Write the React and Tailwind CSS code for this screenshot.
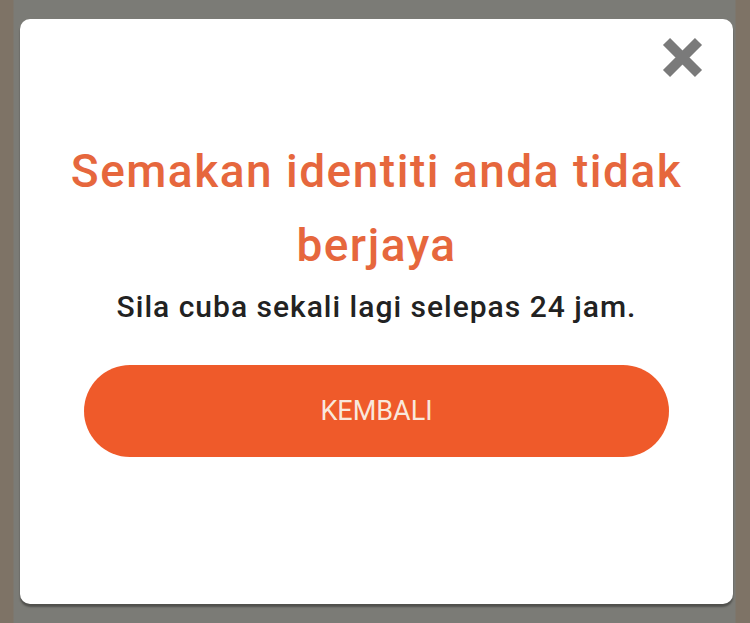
import React from 'react'

const CloseIcon = () => (
  <svg width="41" height="41" viewBox="0 0 41 41" aria-hidden="true">
    <path d="M4.5 4.5 L36.5 36.5 M36.5 4.5 L4.5 36.5" stroke="#7a7a7a" strokeWidth="10" strokeLinecap="butt" />
  </svg>
)

const App = () => {
  return (
    <div className="w-[750px] h-[623px] overflow-hidden pt-[19px] pl-[20px] pr-[17px] bg-[linear-gradient(to_right,#7e7366_0px,#7e7366_13px,#7b7b76_14px,#7b7b76_735px,#7e7366_736px)] font-['Roboto','Liberation_Sans',sans-serif]">
      <div className="h-[585px] rounded-[10px] bg-white shadow-[0_3px_2px_rgba(0,0,0,0.35)] flex flex-col">
        <div className="flex justify-end pt-[18px] pr-[30px]">
          <button type="button" className="w-[41px] h-[41px]">
            <CloseIcon />
          </button>
        </div>

        <h1 className="mt-[56px] text-center text-[46px] leading-[74px] font-medium tracking-[1.5px] text-[#e6673d] px-8">
          Semakan identiti anda tidak berjaya
        </h1>
        <p className="mt-[7px] text-center text-[30px] leading-[36px] font-medium tracking-[1px] text-[#222222]">
          Sila cuba sekali lagi selepas 24 jam.
        </p>

        <div className="mt-[40px] px-[64px]">
          <button
            type="button"
            className="w-full h-[92px] rounded-full bg-[#ef5a2a] text-[#f9e8dc] text-[27px] font-normal"
          >
            KEMBALI
          </button>
        </div>
      </div>
    </div>
  )
}

export default App
